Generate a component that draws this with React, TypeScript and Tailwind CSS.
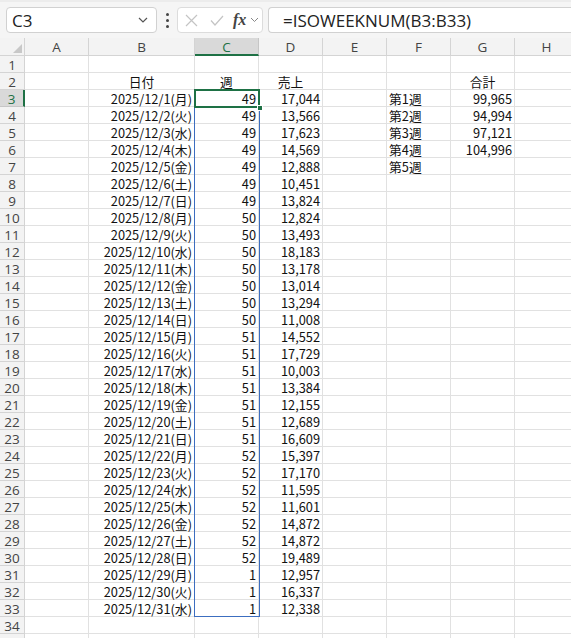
import React from 'react';

const cols = [
  { key: 'A', w: 64 },
  { key: 'B', w: 106 },
  { key: 'C', w: 64 },
  { key: 'D', w: 64 },
  { key: 'E', w: 64 },
  { key: 'F', w: 64 },
  { key: 'G', w: 64 },
  { key: 'H', w: 64 },
];

const days = ['月', '火', '水', '木', '金', '土', '日'];
const sales = [
  '17,044', '13,566', '17,623', '14,569', '12,888', '10,451', '13,824',
  '12,824', '13,493', '18,183', '13,178', '13,014', '13,294', '11,008',
  '14,552', '17,729', '10,003', '13,384', '12,155', '12,689', '16,609',
  '15,397', '17,170', '11,595', '11,601', '14,872', '14,872', '19,489',
  '12,957', '16,337', '12,338',
];
const weekNum = (d: number) => (d <= 7 ? 49 : d <= 14 ? 50 : d <= 21 ? 51 : d <= 28 ? 52 : 1);

type Cell = { text: string; align?: 'left' | 'right' | 'center' };

function buildRows(): Record<string, Cell>[] {
  const rows: Record<string, Cell>[] = [];
  for (let r = 1; r <= 35; r++) rows.push({});
  rows[1] = {
    B: { text: '日付', align: 'center' },
    C: { text: '週', align: 'center' },
    D: { text: '売上', align: 'center' },
    G: { text: '合計', align: 'center' },
  };
  for (let d = 1; d <= 31; d++) {
    const row = rows[d + 1];
    row.B = { text: `2025/12/${d}(${days[(d - 1) % 7]})`, align: 'right' };
    row.C = { text: String(weekNum(d)), align: 'right' };
    row.D = { text: sales[d - 1], align: 'right' };
  }
  const totals = ['99,965', '94,994', '97,121', '104,996', ''];
  totals.forEach((t, i) => {
    rows[i + 2].F = { text: `第${i + 1}週`, align: 'left' };
    if (t) rows[i + 2].G = { text: t, align: 'right' };
  });
  return rows;
}

const rows = buildRows();

function TopBar() {
  return (
    <div className="h-[38px] bg-[#f5f5f5] border-t-2 border-[#ececec] flex items-center pl-[6px] gap-0">
      <div className="w-[151px] h-[26px] bg-white border border-[#d1d1d1] rounded-[4px] flex items-center justify-between pl-[5px] pr-[8px]">
        <span className="text-[17px] text-[#222] leading-none" style={{ fontFamily: '"Open Sans", sans-serif' }}>C3</span>
        <svg width="10" height="6" viewBox="0 0 10 6" fill="none" stroke="#555" strokeWidth="1.2">
          <path d="M1 1l4 4 4-4" />
        </svg>
      </div>
      <div className="w-[20px] flex flex-col items-center gap-[3px]">
        <span className="w-[3px] h-[3px] rounded-full bg-[#444]" />
        <span className="w-[3px] h-[3px] rounded-full bg-[#444]" />
        <span className="w-[3px] h-[3px] rounded-full bg-[#444]" />
      </div>
      <div className="w-[86px] h-[26px] bg-white border border-[#dcdcdc] rounded-[4px] flex items-center pl-[7px]">
        <svg width="13" height="13" viewBox="0 0 13 13" stroke="#c4c4c4" strokeWidth="1.2" fill="none">
          <path d="M1 1l11 11M12 1L1 12" />
        </svg>
        <svg className="ml-[12px]" width="14" height="11" viewBox="0 0 14 11" stroke="#c4c4c4" strokeWidth="1.2" fill="none">
          <path d="M1 5.5l4 4.5 8-9" />
        </svg>
        <span className="ml-[9px] text-[16px] italic font-bold text-[#444] leading-none" style={{ fontFamily: '"Liberation Serif", serif' }}>fx</span>
        <svg className="ml-[4px]" width="9" height="6" viewBox="0 0 9 6" fill="none" stroke="#888" strokeWidth="1">
          <path d="M1 1l3.5 3.5L8 1" />
        </svg>
      </div>
      <div className="ml-[5px] flex-1 h-[26px] bg-white border border-r-0 border-[#d1d1d1] rounded-l-[4px] flex items-center pl-[14px]">
        <span className="text-[17px] text-[#222] leading-none whitespace-nowrap" style={{ fontFamily: '"Open Sans", sans-serif' }}>=ISOWEEKNUM(B3:B33)</span>
      </div>
    </div>
  );
}

function Grid() {
  const gridCols = `25px ${cols.map((c) => `${c.w}px`).join(' ')}`;
  return (
    <div className="relative">
      <div className="grid" style={{ gridTemplateColumns: gridCols }}>
        {/* header row */}
        <div className="h-[18px] bg-[#f3f3f3] border-r border-b border-[#d4d4d4] relative">
          <svg className="absolute right-[2px] bottom-[2px]" width="9" height="9" viewBox="0 0 9 9">
            <path d="M9 0V9H0Z" fill="#c8c8c8" />
          </svg>
        </div>
        {cols.map((c) =>
          c.key === 'C' ? (
            <div key={c.key} className="h-[18px] bg-[#d9d9d9] border-r border-[#c6c6c6] border-b-2 border-b-[#1e7145] flex items-center justify-center pt-[3px] text-[13.5px] leading-none text-[#1e7145]" style={{ fontFamily: '"Open Sans", sans-serif' }}>
              {c.key}
            </div>
          ) : (
            <div key={c.key} className="h-[18px] bg-[#f3f3f3] border-r border-b border-[#d4d4d4] flex items-center justify-center pt-[3px] text-[13.5px] leading-none text-[#444]" style={{ fontFamily: '"Open Sans", sans-serif' }}>
              {c.key}
            </div>
          )
        )}
        {rows.map((row, i) => {
          const r = i + 1;
          const sel = r === 3;
          return (
            <React.Fragment key={r}>
              <div
                className={
                  sel
                    ? 'h-[17px] bg-[#d9d9d9] border-r-2 border-r-[#1e7145] border-b border-[#c6c6c6] flex items-center justify-center pt-[3px] leading-none text-[13.5px] text-[#1e7145]'
                    : 'h-[17px] bg-[#f3f3f3] border-r border-b border-[#d4d4d4] flex items-center justify-center pt-[3px] leading-none text-[13.5px] text-[#444]'
                }
                style={{ fontFamily: '"Open Sans", sans-serif' }}
              >
                {r <= 34 ? r : ''}
              </div>
              {cols.map((c) => {
                const cell = row[c.key];
                return (
                  <div
                    key={c.key}
                    className={
                      'h-[17px] border-r border-b border-[#e1e1e1] flex items-center px-[2px] pt-[3px] leading-none text-[12.8px] text-[#111] whitespace-nowrap ' +
                      (cell?.align === 'right' ? 'justify-end' : cell?.align === 'center' ? 'justify-center' : 'justify-start')
                    }
                    style={{ fontFamily: '"Noto Sans CJK JP", sans-serif' }}
                  >
                    {cell?.text}
                  </div>
                );
              })}
            </React.Fragment>
          );
        })}
      </div>
      {/* spill range */}
      <div className="absolute left-[194px] top-[52px] w-[66px] h-[527px] border border-[#3c6ec0] pointer-events-none" />
      {/* active cell */}
      <div className="absolute left-[194px] top-[51px] w-[66px] h-[19px] border-2 border-[#1e7145] pointer-events-none" />
      <div className="absolute left-[257px] top-[67px] w-[6px] h-[6px] bg-[#1e7145] border border-white pointer-events-none" />
    </div>
  );
}

export default function App() {
  return (
    <div className="w-[571px] h-[638px] overflow-hidden bg-white">
      <TopBar />
      <Grid />
    </div>
  );
}
